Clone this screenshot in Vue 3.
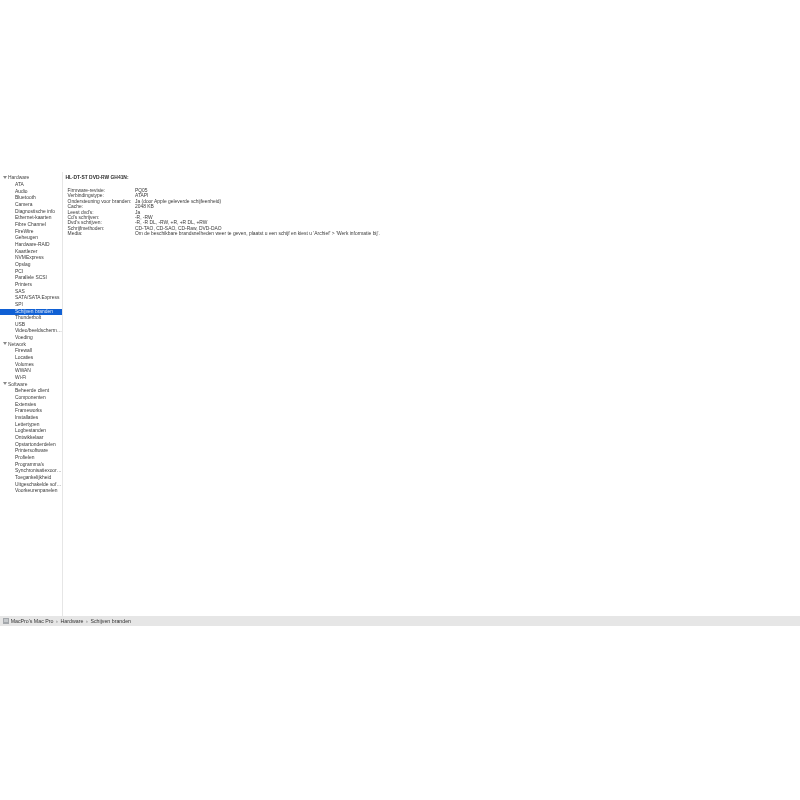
<script setup>
const groups = [
  { name: 'Hardware', items: ['ATA','Audio','Bluetooth','Camera','Diagnostische info','Ethernet-kaarten','Fibre Channel','FireWire','Geheugen','Hardware-RAID','Kaartlezer','NVMExpress','Opslag','PCI','Parallele SCSI','Printers','SAS','SATA/SATA Express','SPI','Schijven branden','Thunderbolt','USB','Video/beeldscherm…','Voeding'] },
  { name: 'Network', items: ['Firewall','Locaties','Volumes','WWAN','Wi-Fi'] },
  { name: 'Software', items: ['Beheerde client','Componenten','Extensies','Frameworks','Installaties','Lettertypen','Logbestanden','Ontwikkelaar','Opstartonderdelen','Printersoftware','Profielen',"Programma's",'Synchronisatiexoor…','Toegankelijkheid','Uitgeschakelde sof…','Voorkeurenpanelen'] }
]
const details = [
  ['Firmware-revisie:', 'PQ05'],
  ['Verbindingstype:', 'ATAPI'],
  ['Ondersteuning voor branden:', 'Ja (door Apple geleverde schijfeenheid)'],
  ['Cache:', '2048 KB'],
  ["Leest dvd's:", 'Ja'],
  ["Cd's schrijven:", '-R, -RW'],
  ["Dvd's schrijven:", '-R, -R DL, -RW, +R, +R DL, +RW'],
  ['Schrijfmethoden:', 'CD-TAO, CD-SAO, CD-Raw, DVD-DAO'],
  ['Media:', "Om de beschikbare brandsnelheden weer te geven, plaatst u een schijf en kiest u 'Archief' > 'Werk informatie bij'."]
]
</script>

<template>
  <div class="page">
    <div class="window">
      <div class="main">
        <aside class="sidebar">
          <template v-for="g in groups" :key="g.name">
            <div class="row group"><span class="tri"></span>{{ g.name }}</div>
            <div
              v-for="i in g.items"
              :key="i"
              class="row item"
              :class="{ selected: i === 'Schijven branden' }"
            >{{ i }}</div>
          </template>
        </aside>
        <section class="content">
          <div class="title">HL-DT-ST DVD-RW GH41N:</div>
          <div class="table">
            <template v-for="d in details" :key="d[0]">
              <div class="label">{{ d[0] }}</div>
              <div class="value">{{ d[1] }}</div>
            </template>
          </div>
        </section>
      </div>
      <footer class="path">
        <svg class="disk" width="6" height="6" viewBox="0 0 6 6">
          <rect x="0" y="0" width="6" height="6" fill="#a3a7ab" />
          <rect x="1" y="1" width="4" height="3" fill="#c6c9cc" />
        </svg>
        <span>MacPro's Mac Pro</span><i>›</i><span>Hardware</span><i>›</i><span>Schijven branden</span>
      </footer>
    </div>
  </div>
</template>

<style>
html, body { margin: 0; background: #fff; }
</style>

<style scoped>
.page {
  width: 800px;
  height: 800px;
  padding-top: 172px;
  box-sizing: border-box;
  background: #fff;
  font-family: "Liberation Sans", Arial, sans-serif;
  font-size: 4.93px;
  color: #3a3a3a;
  overflow: hidden;
}
.window { display: flex; flex-direction: column; height: 453.5px; filter: blur(0.2px); }
.main { flex: 1; display: flex; min-height: 0; }
.sidebar {
  width: 62px;
  border-right: 1px solid #e6e6e6;
  padding-top: 3.4px;
  flex: none;
}
.row {
  height: 6.66px;
  line-height: 6.66px;
  white-space: nowrap;
  overflow: hidden;
}
.group { padding-left: 3px; color: #444; }
.tri {
  display: inline-block;
  width: 0;
  height: 0;
  margin-right: 1px;
  vertical-align: 0.5px;
  border-left: 2px solid transparent;
  border-right: 2px solid transparent;
  border-top: 3px solid #888;
}
.item { padding-left: 15px; }
.selected { background: #1060d4; color: #dfe9fa; }
.content { flex: 1; padding: 2.5px 0 0 2.4px; min-width: 0; }
.title { font-weight: 700; height: 6.66px; line-height: 6.66px; color: #2a2a2a; }
.table {
  margin: 6.8px 0 0 2.2px;
  display: grid;
  grid-template-columns: 67.4px 1fr;
  grid-auto-rows: 5.4px;
  line-height: 5.4px;
  white-space: nowrap;
}
.path {
  height: 9.5px;
  flex: none;
  background: #e6e6e6;
  box-sizing: border-box;
  display: flex;
  align-items: center;
  gap: 2.7px;
  padding-left: 2.7px;
  font-size: 5.25px;
  color: #333;
}
.path i { font-style: normal; color: #666; }
.disk { margin-right: -0.7px; }
</style>
